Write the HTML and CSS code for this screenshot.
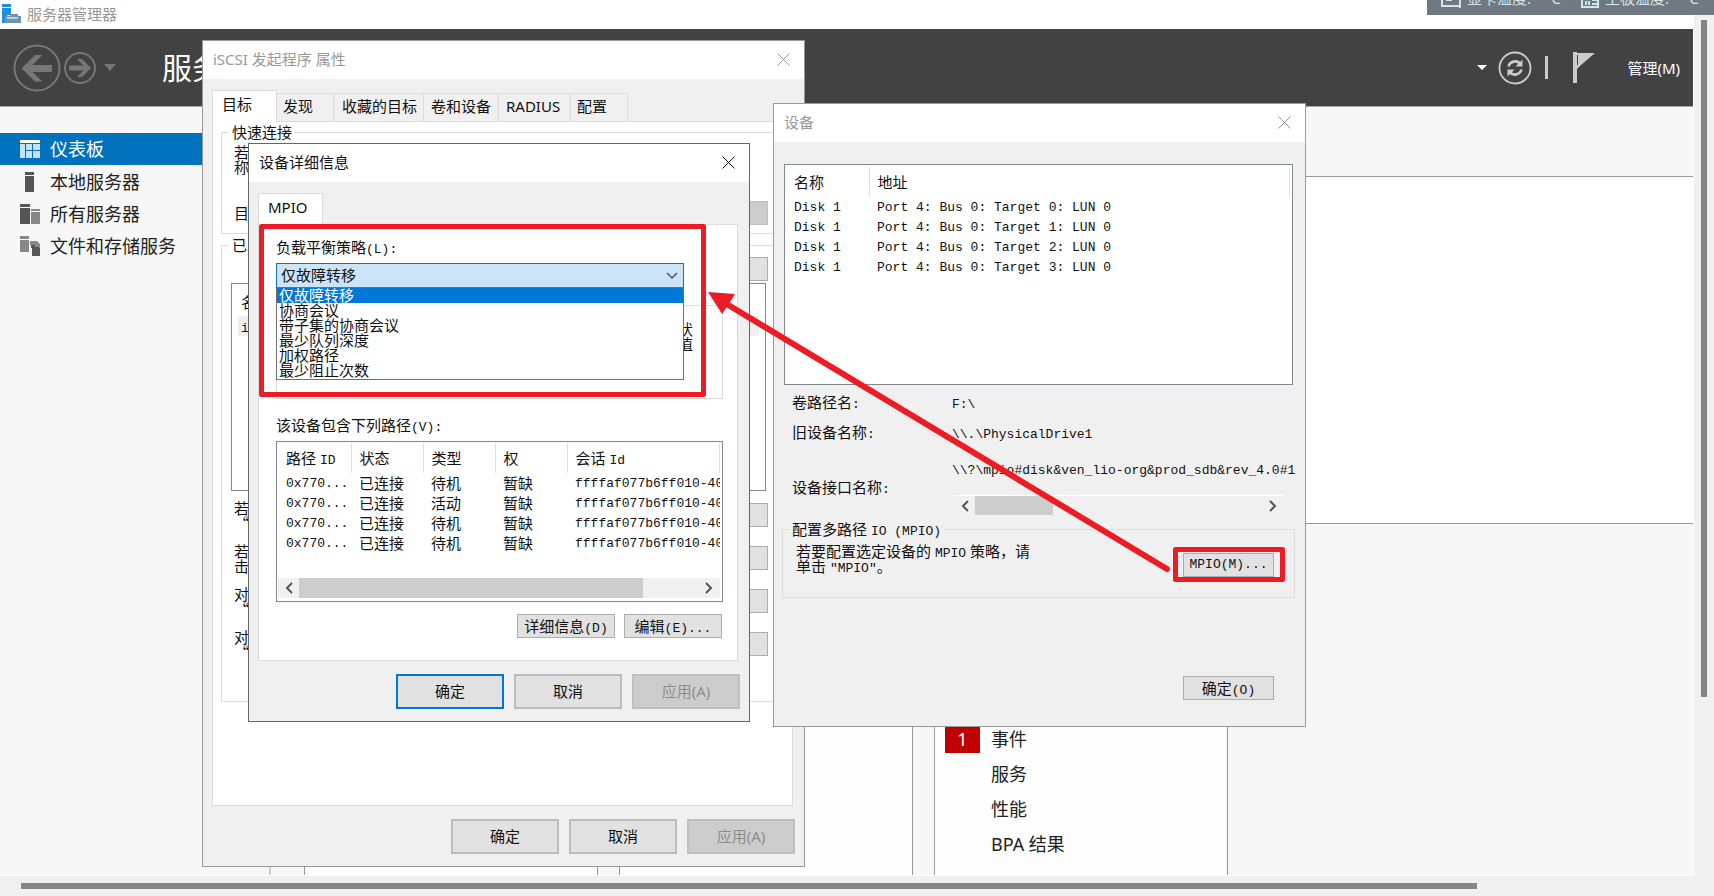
FILE: index.html
```html
<!DOCTYPE html>
<html lang="zh-CN">
<head>
<meta charset="utf-8">
<title>服务器管理器</title>
<link rel="stylesheet" href="styles.css">
</head>
<body>
<div class="desktop">
  <main class="manager">
    <div class="manager-title">
      <svg class="app-icon" width="20" height="20" viewBox="0 0 20 20" aria-hidden="true">
        <rect x="0" y="0" width="9" height="3" fill="#1f8fe0"/><rect x="0" y="4" width="9" height="15" fill="#1f8fe0"/>
        <path d="M6 11h13v8H3v-5z" fill="#fff"/><path d="M8 10h8v2h3v7H3v-7h5z" fill="#6e93ab"/><rect x="5" y="13" width="11" height="2" fill="#b9d3e3"/>
      </svg>
      <span>服务器管理器</span>
    </div>
    <header class="manager-header">
      <button class="icon-btn" aria-label="后退">
        <svg width="48" height="48" viewBox="0 0 48 48"><circle cx="24" cy="24" r="22.5" fill="none" stroke="#777" stroke-width="2"/><path d="M8.500 24.500 22 11h7.500L19.500 21H39v7H19.500l10 9.500H22z" fill="#777"/></svg>
      </button>
      <button class="icon-btn" aria-label="前进">
        <svg width="34" height="34" viewBox="0 0 34 34"><circle cx="17" cy="17" r="15" fill="none" stroke="#777" stroke-width="2"/><path d="M28 17 19 26h-5l6.500-6.500H6v-5h14.500L14 8h5z" fill="#777"/></svg>
      </button>
      <svg class="nav-caret" width="12" height="8" viewBox="0 0 12 8"><path d="M0 0h12L6 7z" fill="#777"/></svg>
      <h1>服务器管理器</h1>
      <div class="header-tools">
        <svg width="10" height="6" viewBox="0 0 10 6"><path d="M0 0h10L5 5z" fill="#fff"/></svg>
        <button class="icon-btn" aria-label="刷新">
          <svg width="34" height="34" viewBox="0 0 34 34"><circle cx="17" cy="17" r="15.500" fill="none" stroke="#ccc" stroke-width="1.800"/><g fill="none" stroke="#ccc" stroke-width="2.600"><path d="M10.500 15.500C12 10 18.500 9 22 12.500"/><path d="M23.500 18.500C22 24 15.500 25 12 21.500"/></g><path d="M24.500 8.500v7h-7zM9.500 25.500v-7h7z" fill="#ccc"/></svg>
        </button>
        <span class="divider"></span>
        <button class="icon-btn flag" aria-label="通知">
          <svg width="22" height="31" viewBox="0 0 22 31"><path d="M0 0h4v31H0z" fill="#ccc"/><path d="M4 1h18L8 13l-4 4z" fill="#ccc"/><path d="M4.500 3v10" stroke="#424242"/></svg>
        </button>
        <button class="menu-btn">管理(M)</button>
      </div>
    </header>
    <div class="manager-body">
      <nav class="sidebar">
        <a class="nav-item selected" href="#">
          <svg width="20" height="20" viewBox="0 0 20 20"><path d="M0 1h20v3H0z" fill="#fff"/><path d="M0 5h5v14H0zM6 5h6v6H6zM13 5h7v6h-7zM6 12h6v7H6zM13 12h7v7h-7z" fill="#c7e1f5"/></svg>仪表板</a>
        <a class="nav-item" href="#">
          <svg width="20" height="20" viewBox="0 0 20 20"><path d="M5 0h9v3H5zM5 4h9v16H5z" fill="#555"/></svg>本地服务器</a>
        <a class="nav-item" href="#">
          <svg width="20" height="20" viewBox="0 0 20 20"><path d="M0 0h10v3H0zM0 4h10v16H0z" fill="#555"/><path d="M11 5h9v2h-9zM11 8h9v12h-9z" fill="#888"/></svg>所有服务器</a>
        <a class="nav-item" href="#">
          <svg width="20" height="20" viewBox="0 0 20 20"><path d="M0 0h9v3H0zM0 4h9v12H0z" fill="#888"/><path d="M11 8h6l3 4v8h-8v-8h-1z" fill="#555"/><path d="M10 5h7l3 3v3h-5V9h-5z" fill="#888"/></svg>文件和存储服务</a>
      </nav>
      <section class="dashboard">
        <div class="welcome"></div>
        <div class="tiles">
          <div class="tile"></div>
          <div class="tile"></div>
          <div class="tile">
            <ul>
              <li><span class="badge">1</span><a href="#">事件</a></li>
              <li><a href="#">服务</a></li>
              <li><a href="#">性能</a></li>
              <li><a href="#">BPA 结果</a></li>
            </ul>
          </div>
        </div>
      </section>
    </div>
  </main>
  <div class="vscroll"><div class="vthumb"></div></div>
  <div class="hscroll"><div class="hthumb"></div></div>

  <aside class="sensors">
    <div class="sensor-row">
      <svg width="20" height="17" viewBox="0 0 20 17"><path d="M1 0v15h18V0M19 15v2M5 9h6" fill="none" stroke="#cfe5e6" stroke-width="2"/></svg>
      <span class="sensor">显卡温度:</span><span class="unit">°C</span>
      <svg width="18" height="16" viewBox="0 0 18 16"><path d="M1 0v15h16V0M5 9v4M8 9v4M11 8h5M11 12h5" fill="none" stroke="#cfe5e6" stroke-width="2"/></svg>
      <span class="sensor">主板温度:</span><span class="unit">°C</span>
    </div>
  </aside>

  <section class="window iscsi" aria-label="iSCSI 发起程序 属性">
    <div class="titlebar"><h2>iSCSI 发起程序 属性</h2>
      <button class="close" aria-label="关闭"><svg width="13" height="13" viewBox="0 0 13 13"><path d="M.5.500l12 12M12.500.500l-12 12" stroke="currentColor" fill="none"/></svg></button></div>
    <div class="sheet">
      <div class="tabs" role="tablist">
        <button class="tab active w1" role="tab">目标</button><button class="tab w2" role="tab">发现</button><button class="tab w3" role="tab">收藏的目标</button><button class="tab w4" role="tab">卷和设备</button><button class="tab w5" role="tab">RADIUS</button><button class="tab w2" role="tab">配置</button>
      </div>
      <div class="pane iscsi-pane">
        <fieldset class="quick">
          <legend>快速连接</legend>
          <p>若<br>称</p>
          <div class="row"><span>目</span><button class="small" disabled aria-label="快速连接"></button></div>
        </fieldset>
        <fieldset class="found">
          <legend>已发现的目标</legend>
          <div class="row end"><button class="small" aria-label="刷新"></button></div>
          <div class="target-list"><div class="target-head">名</div><div class="target-row"><span class="m">i</span></div></div>
          <div class="row help"><p>若<br>“</p><button class="small" aria-label="连接"></button></div>
          <div class="row help"><p>若<br>击</p><button class="small" aria-label="断开连接"></button></div>
          <div class="row help"><p>对<br>“</p><button class="small" aria-label="属性"></button></div>
          <div class="row help"><p>对<br>“</p><button class="small" aria-label="设备"></button></div>
        </fieldset>
      </div>
      <div class="footer"><button class="push">确定</button><button class="push">取消</button><button class="push" disabled>应用(A)</button></div>
    </div>
  </section>

  <section class="window devices" aria-label="设备">
    <div class="titlebar"><h2>设备</h2>
      <button class="close" aria-label="关闭"><svg width="13" height="13" viewBox="0 0 13 13"><path d="M.5.500l12 12M12.500.500l-12 12" stroke="currentColor" fill="none"/></svg></button></div>
    <div class="devices-body">
      <div class="listview disks">
        <table>
          <colgroup><col class="c-name"><col></colgroup>
          <thead><tr><th>名称</th><th>地址</th></tr></thead>
          <tbody>
            <tr><td class="m">Disk 1</td><td class="m">Port 4: Bus 0: Target 0: LUN 0</td></tr>
            <tr><td class="m">Disk 1</td><td class="m">Port 4: Bus 0: Target 1: LUN 0</td></tr>
            <tr><td class="m">Disk 1</td><td class="m">Port 4: Bus 0: Target 2: LUN 0</td></tr>
            <tr><td class="m">Disk 1</td><td class="m">Port 4: Bus 0: Target 3: LUN 0</td></tr>
          </tbody>
        </table>
      </div>
      <dl class="props">
        <dt>卷路径名<span class="m">:</span></dt><dd class="m">F:\</dd>
        <dt>旧设备名称<span class="m">:</span></dt><dd class="m">\\.\PhysicalDrive1</dd>
        <dt class="tall">设备接口名称<span class="m">:</span></dt>
        <dd class="path m">\\?\mpio#disk&amp;ven_lio-org&amp;prod_sdb&amp;rev_4.0#1
          <div class="scroller lined"><svg width="8" height="12" viewBox="0 0 8 12"><path d="M7 1 2 6l5 5" fill="none" stroke="#555" stroke-width="2"/></svg><div class="track"><div class="thumb short"></div></div><svg width="8" height="12" viewBox="0 0 8 12"><path d="m1 1 5 5-5 5" fill="none" stroke="#555" stroke-width="2"/></svg></div>
        </dd>
      </dl>
      <fieldset class="mpio">
        <legend>配置多路径 <span class="m">IO (MPIO)</span></legend>
        <div class="mpio-row"><p>若要配置选定设备的 <span class="m">MPIO</span> 策略，请<br>单击 <span class="m">"MPIO"</span>。</p><button class="small m">MPIO(M)...</button></div>
      </fieldset>
      <div class="ok-row"><button class="small">确定<span class="m">(O)</span></button></div>
    </div>
  </section>

  <section class="window details" aria-label="设备详细信息">
    <div class="titlebar"><h2>设备详细信息</h2>
      <button class="close" aria-label="关闭"><svg width="13" height="13" viewBox="0 0 13 13"><path d="M.5.500l12 12M12.500.500l-12 12" stroke="currentColor" fill="none"/></svg></button></div>
    <div class="sheet">
      <div class="tabs" role="tablist"><button class="tab active w1" role="tab">MPIO</button></div>
      <div class="pane details-pane">
        <label class="line" for="policy">负载平衡策略<span class="m">(L):</span></label>
        <div class="combo">
          <select id="policy"><option>仅故障转移</option></select>
          <svg class="chevron" width="12" height="8" viewBox="0 0 12 8"><path d="m1 1 5 5 5-5" fill="none" stroke="#555" stroke-width="1.500"/></svg>
          <ul class="options" role="listbox">
            <li class="current" role="option">仅故障转移</li><li role="option">协商会议</li><li role="option">带子集的协商会议</li><li role="option">最少队列深度</li><li role="option">加权路径</li><li role="option">最少阻止次数</li>
          </ul>
        </div>
        <div class="note">状<br>值</div>
        <div class="line paths-label">该设备包含下列路径<span class="m">(V):</span></div>
        <div class="listview paths">
          <div class="clip">
          <table>
            <colgroup><col class="c-id"><col class="c-mid"><col class="c-mid"><col class="c-mid"><col></colgroup>
            <thead><tr><th>路径 <span class="m">ID</span></th><th>状态</th><th>类型</th><th>权</th><th>会话 <span class="m">Id</span></th></tr></thead>
            <tbody>
              <tr><td class="m">0x770...</td><td>已连接</td><td>待机</td><td>暂缺</td><td class="m">ffffaf077b6ff010-400</td></tr>
              <tr><td class="m">0x770...</td><td>已连接</td><td>活动</td><td>暂缺</td><td class="m">ffffaf077b6ff010-400</td></tr>
              <tr><td class="m">0x770...</td><td>已连接</td><td>待机</td><td>暂缺</td><td class="m">ffffaf077b6ff010-400</td></tr>
              <tr><td class="m">0x770...</td><td>已连接</td><td>待机</td><td>暂缺</td><td class="m">ffffaf077b6ff010-400</td></tr>
            </tbody>
          </table>
          </div>
          <div class="scroller"><svg width="8" height="12" viewBox="0 0 8 12"><path d="M7 1 2 6l5 5" fill="none" stroke="#555" stroke-width="2"/></svg><div class="track"><div class="thumb"></div></div><svg width="8" height="12" viewBox="0 0 8 12"><path d="m1 1 5 5-5 5" fill="none" stroke="#555" stroke-width="2"/></svg></div>
        </div>
        <div class="path-buttons"><button class="small">详细信息<span class="m">(D)</span></button><button class="small">编辑<span class="m">(E)...</span></button></div>
      </div>
      <div class="footer"><button class="push default">确定</button><button class="push">取消</button><button class="push" disabled>应用(A)</button></div>
    </div>
  </section>

  <svg class="marks" width="1040" height="370" viewBox="0 0 1040 370" aria-hidden="true">
    <g fill="none" stroke="#ed1c24" stroke-width="5" stroke-linejoin="round">
      <rect x="11.500" y="16.500" width="442" height="168"/>
      <rect x="925.500" y="339.500" width="107" height="30"/>
    </g>
    <path d="M917 359 475 93" stroke="#ed1c24" stroke-width="6" stroke-linecap="round"/>
    <path d="M458 82 485 84 479 94 472 104z" fill="#ed1c24"/>
  </svg>
</div>
</body>
</html>
```
FILE: styles.css
```css
* { box-sizing: border-box; }
body {
  margin: 0;
  font: 15px/20px "Noto Sans", "Noto Sans CJK SC", sans-serif;
  color: #111;
  background: #f0f0f0;
}
h1, h2, p, ul, dl, dd, fieldset { margin: 0; padding: 0; }
h1, h2, th { font-weight: 400; }
ul { list-style: none; }
a { color: inherit; text-decoration: none; }
button { font: inherit; color: inherit; padding: 0; margin: 0; }
svg { display: block; flex: none; }
.m { font-family: "Liberation Mono", monospace; font-size: 13px; }
span.m { line-height: 10px; }

.desktop {
  position: relative;
  min-height: 100vh;
  overflow: hidden;
  display: grid;
  grid-template-columns: 1fr 20px;
  grid-template-rows: 1fr 20px;
}

/* Server manager */
.manager { display: flex; flex-direction: column; min-width: 0; background: #f7f7f7; border-right: 1px solid #fff; border-bottom: 1px solid #fff; }
.manager-title { display: flex; align-items: center; gap: 5px; height: 29px; padding: 0 0 2px 2px; background: #fff; color: #999; }
.manager-header { display: flex; align-items: center; height: 78px; padding: 0 13px 0 13px; background: #424242; border-bottom: 1px solid #aaa; color: #fff; }
.manager-header h1 { margin-left: 46px; font-size: 30px; line-height: 40px; }
.icon-btn { border: 0; background: none; }
.manager-header > .icon-btn + .icon-btn { margin-left: 2px; }
.nav-caret { margin-left: 7px; }
.header-tools { display: flex; align-items: center; margin-left: auto; }
.header-tools .icon-btn { margin-left: 11px; }
.divider { width: 3px; height: 23px; margin-left: 13px; background: #ccc; }
.header-tools .flag { margin-left: 25px; }
.menu-btn { margin-left: 32px; border: 0; background: none; }
.manager-body { display: flex; flex: 1; }
.sidebar { width: 271px; padding-top: 26px; border-right: 2px solid #ccc; }
.nav-item { display: flex; align-items: center; gap: 10px; height: 32px; padding-left: 20px; font-size: 18px; color: #222; }
.nav-item.selected { margin-bottom: 1px; background: #0072bd; color: #fff; }
.dashboard { display: flex; flex-direction: column; flex: 1; padding: 69px 0 0 33px; }
.welcome { height: 348px; border: 1px solid #999; border-right: 0; background: #fff; }
.tiles { display: flex; gap: 21px; flex: 1; margin-top: 48px; }
.tile { width: 294px; border: 1px solid #999; border-bottom: 0; background: #fdfdfd; }
.tile ul { padding-top: 148px; }
.tile li { display: flex; height: 35px; align-items: center; justify-content: flex-end; padding-right: 10px; font-size: 18px; color: #222; }
.tile a { width: 226px; }
.badge { width: 35px; line-height: 28px; margin-right: 11px; background: #c00000; color: #fff; text-align: center; }

.vscroll { padding: 20px 7px; }
.vthumb { height: 81%; background: #868686; }
.hscroll { grid-column: 1 / -1; padding: 7px 237px 7px 21px; }
.hthumb { height: 6px; background: #868686; }

/* Hardware sensor overlay */
.sensors { position: absolute; top: 0; right: 0; width: 287px; height: 15px; overflow: hidden; background: #707881; color: #cfe5e6; }
.sensor-row { display: flex; align-items: flex-end; height: 8px; padding-left: 14px; }
.sensor-row span { line-height: 20px; }
.sensor { width: 84px; padding-left: 6px; }
.unit { width: 36px; }
.sensor-row .unit:last-child { width: auto; }

/* Windows */
.window { position: absolute; border: 1px solid #999; background: #f0f0f0; }
.iscsi { left: 202px; top: 40px; width: 603px; }
.devices { left: 773px; top: 103px; width: 533px; }
.details { left: 248px; top: 143px; width: 502px; border-color: #666; }
.titlebar { display: flex; align-items: center; justify-content: space-between; height: 38px; padding: 0 14px 2px 10px; background: #fff; color: #999; }
.titlebar h2 { font-size: 15px; line-height: 20px; }
.details .titlebar { color: #111; }
.close { border: 0; background: none; }
.sheet { padding: 10px 9px 12px; }

.tabs { display: flex; align-items: flex-end; height: 32px; }
.tab { height: 28px; border: 1px solid #dcdcdc; border-left: 0; border-bottom: 0; background: #f0f0f0; text-align: left; padding: 0 0 3px 6px; }
.tab.active { position: relative; height: 32px; margin-bottom: -1px; border-left: 1px solid #dcdcdc; background: #fff; padding: 0 0 5px 9px; }
.w1 { width: 65px; }
.w2 { width: 57px; }
.w3 { width: 90px; padding-left: 8px; }
.w4 { width: 75px; padding-left: 7px; }
.w5 { width: 72px; padding-left: 7px; }
.pane { margin-right: 2px; border: 1px solid #dcdcdc; background: #fff; }
fieldset { min-width: 0; border: 1px solid #dcdcdc; }
legend { margin-left: 7px; padding: 0 3px; line-height: 20px; }

.small { width: 98px; height: 24px; border: 1px solid #adadad; background: #e1e1e1; line-height: 20px; }
.small:disabled { border-color: #bfbfbf; background: #ccc; }
.push { width: 108px; height: 35px; padding-bottom: 1px; border: 2px solid #bcbcbc; background: #e1e1e1; }
.push:disabled { background: #ccc; border-color: #bfbfbf; color: #8c8c8c; }
.push.default { border-color: #0078d7; }
.footer { display: flex; justify-content: flex-end; gap: 10px; margin-top: 13px; }

.iscsi-pane { padding: 0 8px 103px; }
.iscsi fieldset { padding: 2px 15px 8px 9px; }
.iscsi p { line-height: 15px; padding-left: 3px; font-family: "Noto Sans CJK SC", sans-serif; }
.row { display: flex; align-items: center; justify-content: space-between; }
.row.end { justify-content: flex-end; }
.row > span { padding-left: 3px; }
.iscsi legend { margin-left: -2px; }
.quick .row { margin-top: 27px; }
.found { margin-top: 1px; }
.iscsi .found { padding-bottom: 36px; }
.target-list { height: 208px; margin: 2px 2px 2px 0; padding: 8px 6px; border: 1px solid #828790; background: #fff; }
.target-head { padding-left: 3px; }
.target-row { margin-top: 4px; padding-left: 3px; background: #f0f0f0; }
.help { height: 43px; }

.listview { border: 1px solid #828790; background: #fff; }
table { width: 100%; border-collapse: collapse; table-layout: fixed; }
th, td { padding: 0 0 0 8px; height: 20px; line-height: 20px; text-align: left; white-space: nowrap; }
td.m { padding-top: 2px; line-height: 18px; }
thead th { height: 30px; border-right: 1px solid #e0e0e0; }
.disks { height: 221px; padding: 2px 2px 0 1px; }
.c-name { width: 83px; }
.devices-body { padding: 22px 12px 26px 10px; }
.props { display: grid; grid-template-columns: 160px 1fr; grid-template-rows: 30px 30px auto; margin: 2px 10px 0 8px; line-height: 30px; }
.props dd { padding-top: 3px; }
.props .tall { margin-top: 25px; }
.props .path { line-height: 20px; padding-top: 14px; white-space: nowrap; }
.scroller { display: flex; align-items: center; height: 20px; padding: 0 7px; gap: 6px; background: #f0f0f0; }
.track { flex: 1; height: 100%; }
.thumb { width: 86%; height: 100%; background: #cdcdcd; }
.thumb.short { width: 27%; }
.lined { margin: 14px 11px 0 2px; border-top: 1px solid #fff; }
.mpio { margin: 4px -2px 0 -2px; padding: 0 20px 20px 13px; }
.mpio legend { margin-left: -7px; }
.mpio-row { display: flex; align-items: flex-end; justify-content: space-between; }
.mpio p { line-height: 15px; align-self: flex-start; padding-top: 5px; }
.mpio .small { width: 91px; margin-top: 14px; }
.ok-row { display: flex; justify-content: flex-end; margin: 78px 19px 0 0; }
.ok-row .small { width: 91px; }

.details-pane { padding: 12px 14px 22px 17px; }
.line { display: block; line-height: 20px; }
.combo { position: relative; width: 408px; margin-top: 6px; }
.combo select { display: block; width: 100%; height: 25px; padding: 0 4px 2px; border: 1px solid #1a6fb5; border-radius: 0; appearance: none; background: #cce4f7; font: inherit; color: #111; }
.chevron { position: absolute; right: 6px; top: 9px; }
.options { position: absolute; left: 0; top: 24px; width: 100%; border: 1px solid #707070; background: #fff; }
.options li { padding-left: 2px; line-height: 15px; height: 15px; }
.options li:last-child { height: 16px; }
.options .current { background: #0078d7; color: #fff; }
.note { height: 94px; margin-top: 17px; padding: 16px 29px 0 0; border: 1px solid #dcdcdc; line-height: 15px; text-align: right; }
.paths-label { margin-top: 16px; }
.paths { height: 161px; margin-top: 6px; padding: 1px 2px 3px 1px; display: flex; flex-direction: column; justify-content: space-between; }
.clip { overflow: hidden; }
.c-id { width: 73px; }
.c-mid { width: 72px; }
.path-buttons { display: flex; justify-content: flex-end; gap: 9px; margin: 12px 1px 0 0; }

/* Annotation layer */
.marks { position: absolute; left: 250px; top: 210px; overflow: visible; pointer-events: none; }
```
